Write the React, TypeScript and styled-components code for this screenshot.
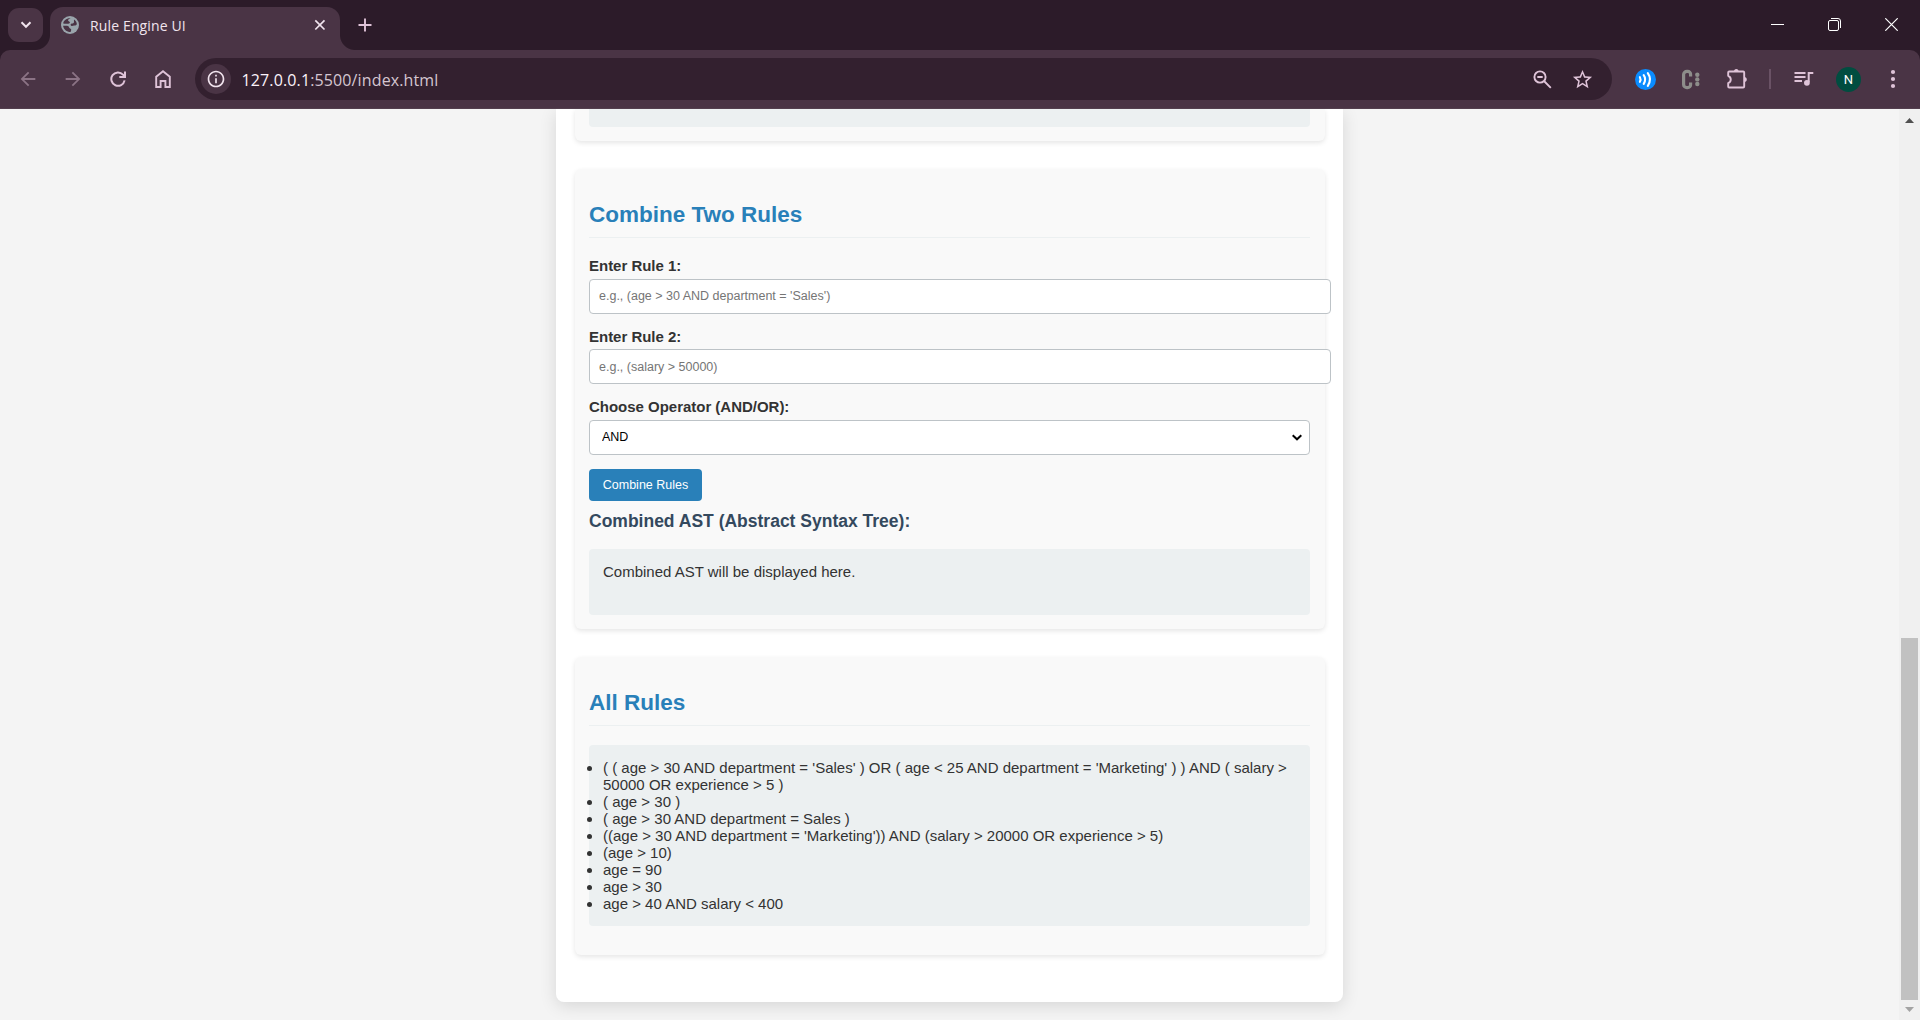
import React from 'react';
import styled, { createGlobalStyle } from 'styled-components';
import { MdArrowBack, MdArrowForward, MdInfoOutline, MdStarBorder } from 'react-icons/md';

const GlobalStyle = createGlobalStyle`
  html, body { margin: 0; padding: 0; overflow: hidden; }
  * { box-sizing: border-box; }
  svg { display: block; flex: none; }
`;

const uiFont = `'Open Sans', 'Noto Sans', sans-serif`;
const pageFont = `'Liberation Sans', Arial, sans-serif`;
const pink = '#dfc3d8';

const Window = styled.div`
  width: 1920px;
  height: 1020px;
  display: flex;
  flex-direction: column;
  overflow: hidden;
  background: #2c1b29;
`;

/* ---------- tab strip ---------- */

const TabStrip = styled.header`
  height: 50px;
  flex: none;
  display: flex;
  align-items: flex-start;
  padding-left: 8px;
`;

const TabSearch = styled.button`
  width: 35px;
  height: 34px;
  margin: 8px 7px 0 0;
  padding: 0;
  border: 0;
  border-radius: 11px;
  background: #4a3445;
  display: flex;
  align-items: center;
  justify-content: center;
`;

const Tab = styled.div`
  position: relative;
  width: 290px;
  height: 43px;
  margin-top: 7px;
  padding: 0 14px 7px 11px;
  border-radius: 13px 13px 0 0;
  background: #4a3445;
  display: flex;
  align-items: center;
  font: 14px ${uiFont};
  color: #f1e4ee;

  &::before,
  &::after {
    content: '';
    position: absolute;
    bottom: 0;
    width: 15px;
    height: 15px;
  }
  &::before {
    left: -15px;
    background: radial-gradient(circle at 0 0, transparent 14.5px, #4a3445 15.5px);
  }
  &::after {
    right: -15px;
    background: radial-gradient(circle at 100% 0, transparent 14.5px, #4a3445 15.5px);
  }
`;

const TabTitle = styled.span`
  flex: 1;
  margin-left: 11px;
  padding-top: 1px;
  line-height: 20px;
  letter-spacing: 0.14px;
  white-space: nowrap;
`;

const NewTab = styled.button`
  width: 40px;
  height: 50px;
  margin-left: 5px;
  padding: 0;
  border: 0;
  background: none;
  display: flex;
  align-items: center;
  justify-content: center;
`;

const WindowControls = styled.div`
  margin-left: auto;
  height: 49px;
  display: flex;
`;

const WindowButton = styled.button`
  width: 57px;
  padding: 0;
  border: 0;
  background: none;
  display: flex;
  align-items: center;
  justify-content: center;
`;

/* ---------- toolbar ---------- */

const Toolbar = styled.nav`
  height: 59px;
  flex: none;
  display: flex;
  align-items: center;
  padding-left: 5px;
  border-radius: 10px 10px 0 0;
  border-bottom: 1px solid #533f4e;
  background: #4a3445;
`;

const Cell = styled.span<{ $w: number; $gap?: number; $tone?: string }>`
  width: ${(p) => p.$w}px;
  height: 42px;
  margin-left: ${(p) => p.$gap ?? 0}px;
  flex: none;
  display: flex;
  align-items: center;
  justify-content: center;
  color: ${(p) => p.$tone ?? pink};
`;

const AddressBar = styled.div`
  width: 1417px;
  height: 42px;
  margin-left: 10px;
  padding-left: 6px;
  padding-right: 10px;
  border-radius: 21px;
  background: #33202f;
  display: flex;
  align-items: center;
  flex: none;
`;

const SiteInfo = styled.span`
  width: 30px;
  height: 30px;
  border-radius: 50%;
  background: #4a3445;
  color: #f1e4ee;
  display: flex;
  align-items: center;
  justify-content: center;
`;

const Url = styled.span`
  flex: 1;
  margin-left: 10.5px;
  padding-top: 1px;
  font: 16px/24px ${uiFont};
  letter-spacing: 0.13px;
  color: #d5c6d1;
`;

const Host = styled.span`
  color: #fbf2f9;
`;

const Separator = styled.span`
  width: 2px;
  height: 20px;
  background: #6a5265;
`;

const Avatar = styled.span`
  width: 25px;
  height: 25px;
  border-radius: 50%;
  background: #004d40;
  color: #fff;
  font: 13px/25px Roboto, sans-serif;
  text-align: center;
`;

/* ---------- page ---------- */

const Viewport = styled.div`
  height: 911px;
  flex: none;
  display: flex;
  overflow: hidden;
  background: #f4f4f4;
`;

const Page = styled.main`
  flex: 1;
  padding-left: 556px;
  overflow: hidden;
  font: 15px/17px ${pageFont};
  color: #333;
`;

const Container = styled.div`
  width: 787px;
  height: 893px;
  padding: 0 18px 0 19px;
  border-radius: 0 0 8px 8px;
  background: #fff;
  box-shadow: 0 4px 17px rgba(0, 0, 0, 0.12);
`;

const Card = styled.section<{ $h: number; $cut?: boolean }>`
  height: ${(p) => p.$h}px;
  margin-bottom: 28px;
  padding: ${(p) => (p.$cut ? '0 15px 14px 14px' : '32px 15px 14px 14px')};
  border-radius: ${(p) => (p.$cut ? '0 0 6px 6px' : '6px')};
  background: #f9f9f9;
  box-shadow: 0 2px 5px rgba(0, 0, 0, 0.1);
`;

const Title = styled.h2`
  height: 37px;
  margin: 0 0 19px;
  padding-top: 1px;
  border-bottom: 1px solid #ecf0f1;
  font-size: 22.5px;
  line-height: 26px;
  color: #2980b9;
`;

const Field = styled.div`
  margin-bottom: 14px;
`;

const Label = styled.label<{ $h?: number }>`
  display: block;
  height: ${(p) => p.$h ?? 22}px;
  font-weight: bold;
  letter-spacing: -0.02px;
`;

const TextInput = styled.input<{ $lift?: number }>`
  display: block;
  width: 742px;
  height: 35px;
  padding: 0 9px ${(p) => p.$lift ?? 0}px;
  border: 1px solid #bdc3c7;
  border-radius: 4px;
  background: #fff;
  font: 12.5px ${pageFont};

  &::placeholder {
    color: #757575;
    opacity: 1;
  }
`;

const SelectBox = styled.div`
  width: 721px;
  height: 35px;
  padding: 0 7px 1px 12px;
  border: 1px solid #bdc3c7;
  border-radius: 4px;
  background: #fff;
  display: flex;
  align-items: center;
`;

const Select = styled.select`
  appearance: none;
  flex: 1;
  padding: 0;
  border: 0;
  background: none;
  font: 12.5px ${pageFont};
  color: #000;
`;

const Button = styled.button`
  display: block;
  width: 113px;
  height: 32px;
  padding: 0 0 1px;
  border: 0;
  border-radius: 4px;
  background: #2980b9;
  color: #fff;
  font: 12.5px ${pageFont};
`;

const Subtitle = styled.h3`
  height: 20px;
  margin: 10px 0 18px;
  font-size: 17.5px;
  line-height: 20px;
  color: #34495e;
`;

const Output = styled.div<{ $h: number; $cut?: boolean }>`
  height: ${(p) => p.$h}px;
  padding: ${(p) => (p.$cut ? 0 : 14)}px;
  border-radius: ${(p) => (p.$cut ? '0 0 4px 4px' : '4px')};
  background: #ecf0f1;
`;

const RuleList = styled.ul`
  width: 721px;
  height: 181px;
  margin: 0;
  padding: 14px;
  border-radius: 4px;
  background: #ecf0f1;
`;

const Scrollbar = styled.aside`
  width: 21px;
  padding: 9px 2px 8px;
  background: #f0f0f0;
  display: flex;
  flex-direction: column;
  align-items: center;
`;

const Thumb = styled.div`
  width: 17px;
  height: 362px;
  margin: auto 0 7px;
  background: #c1c1c1;
`;

const rules = [
  "( ( age > 30 AND department = 'Sales' ) OR ( age < 25 AND department = 'Marketing' ) ) AND ( salary > 50000 OR experience > 5 )",
  '( age > 30 )',
  '( age > 30 AND department = Sales )',
  "((age > 30 AND department = 'Marketing')) AND (salary > 20000 OR experience > 5)",
  '(age > 10)',
  'age = 90',
  'age > 30',
  'age > 40 AND salary < 400',
];

export default function App() {
  return (
    <>
      <GlobalStyle />
      <Window>
        <TabStrip>
          <TabSearch aria-label="Search tabs">
            <svg width="12" height="8" viewBox="0 0 12 8" fill="none" stroke="#f1e4ee" strokeWidth="2">
              <path d="M1.500 1.300 6 5.800l4.500-4.500" />
            </svg>
          </TabSearch>
          <Tab>
            <svg width="18" height="18" viewBox="0 0 18 18">
              <circle cx="9" cy="9" r="9" fill="#9aa5ac" />
              <path
                d="M9.600 2.200c-1 .5-2.400 1-2.500 2-.1 1.200 1.500 1 1.800 2 .3 1.100-1.500 1.500-2.800 1.600-1.400.1-2.300.1-3.900-.2C2.500 4.600 5.300 1.900 9.600 2.200zM2.100 9.700c1.600.2 3.500-.3 4.900.4 1.200.6.8 1.900 2 2.300 1 .4 1.500 1 1.100 2-.3.600-.4 1.100-.4 1.600C5.600 16 2.500 13.300 2.100 9.700zM13.200 3.600c1.500 1.100 2.500 2.700 2.700 4.600-.8.700-1.300 1.500-2.500 1.400-1.300-.1-2.100.6-3.200.1-.8-.4-.8-1.400 0-1.900.9-.5 2-.2 2.600-1.100.600-.900-.3-2 .4-3.100z"
                fill="#4a3445"
              />
            </svg>
            <TabTitle>Rule Engine UI</TabTitle>
            <svg width="12" height="12" viewBox="0 0 12 12" stroke="#f1e4ee" strokeWidth="1.700">
              <path d="M1.300 1.300l9.200 9.200M10.500 1.300l-9.200 9.200" />
            </svg>
          </Tab>
          <NewTab aria-label="New tab">
            <svg width="14" height="14" viewBox="0 0 14 14" stroke={pink} strokeWidth="1.900">
              <path d="M7 .5v13M.5 7h13" />
            </svg>
          </NewTab>
          <WindowControls>
            <WindowButton aria-label="Minimize">
              <svg width="13" height="13" viewBox="0 0 13 13" stroke="#fff">
                <path d="M0 6.500h13" />
              </svg>
            </WindowButton>
            <WindowButton aria-label="Restore">
              <svg width="13" height="13" viewBox="0 0 13 13" fill="none" stroke="#fff">
                <rect x=".5" y="2.500" width="10" height="10" rx="1.500" />
                <path d="M3 .5h7a2.500 2.500 0 0 1 2.500 2.500v7" />
              </svg>
            </WindowButton>
            <WindowButton aria-label="Close">
              <svg width="13" height="13" viewBox="0 0 13 13" stroke="#fff" strokeWidth="1.200">
                <path d="M.3.3l12.400 12.400M12.700.3L.3 12.700" />
              </svg>
            </WindowButton>
          </WindowControls>
        </TabStrip>

        <Toolbar>
          <Cell $w={45} $tone="#8b7385"><MdArrowBack size={22} /></Cell>
          <Cell $w={45} $tone="#8b7385"><MdArrowForward size={22} /></Cell>
          <Cell $w={45}>
            <svg width="16" height="16" viewBox="0 0 16 16" fill="none" stroke="currentColor" strokeWidth="2">
              <path d="M14.600 9.400A6.700 6.700 0 1 1 13 3.600l1.300 1.600M15 .4V6H9.300" />
            </svg>
          </Cell>
          <Cell $w={45}>
            <svg width="16" height="18" viewBox="0 0 16 18" fill="none" stroke="currentColor" strokeWidth="1.900">
              <path d="M1.200 17V6.800L8 1.300l6.800 5.500V17h-4.400v-6H5.600v6z" />
            </svg>
          </Cell>
          <AddressBar>
            <SiteInfo><MdInfoOutline size={20} /></SiteInfo>
            <Url><Host>127.0.0.1</Host>:5500/index.html</Url>
            <Cell $w={40}>
              <svg width="19" height="19" viewBox="0 0 19 19" fill="none" stroke="currentColor" strokeWidth="1.900">
                <circle cx="7" cy="7" r="5.600" />
                <path d="M11 11l6.800 6.800M4.300 7h5.400" />
              </svg>
            </Cell>
            <Cell $w={40}><MdStarBorder size={23} /></Cell>
          </AddressBar>
          <Cell $w={21} $gap={23}>
            <svg width="21" height="21" viewBox="0 0 21 21" fill="none" stroke="#fff" strokeWidth="2.100" strokeLinecap="round">
              <circle cx="10.500" cy="10.500" r="10.500" fill="#0a8cff" stroke="none" />
              <path d="M4.900 8.200q1.300 2.300 0 4.600M8.700 6.200q2.900 4.300 0 8.600M12.800 4.200q4.400 6.300 0 12.600" />
            </svg>
          </Cell>
          <Cell $w={20} $gap={24} $tone="#8d8d8a">
            <svg width="20" height="21" viewBox="0 0 20 21">
              <path
                d="M10.600 7.500V5.500A3 3 0 0 0 7.600 2.300h-.7A3.300 3.300 0 0 0 3.600 5.600v9.800a3.300 3.300 0 0 0 3.300 3.300h.7a3 3 0 0 0 3-3.200v-2"
                fill="none"
                stroke="currentColor"
                strokeWidth="3.200"
              />
              <g fill="currentColor">
                <circle cx="17.300" cy="5.800" r="2.200" />
                <circle cx="17.300" cy="10.400" r="2.200" />
                <circle cx="17.300" cy="15" r="2.200" />
              </g>
            </svg>
          </Cell>
          <Cell $w={22} $gap={26}>
            <svg width="22" height="22" viewBox="0 0 22 22">
              <path d="M2.200 4.500q0-1 1-1h14q1 0 1 1v14q0 1-1 1h-14q-1 0-1-1v-3.300c3.400-1.500 3.400-5.900 0-7.400z" fill="none" stroke="currentColor" strokeWidth="1.900" strokeLinejoin="round" />
              <path d="M8 3.500a2.300 2.600 0 0 1 4.600 0zM18.200 9a2.600 2.500 0 0 1 0 5z" fill="currentColor" />
            </svg>
          </Cell>
          <Cell $w={2} $gap={21}><Separator /></Cell>
          <Cell $w={20} $gap={23}>
            <svg width="20" height="18" viewBox="0 0 20 18">
              <path d="M.5 3h11M.5 7h11M.5 11h7.500" fill="none" stroke="currentColor" strokeWidth="1.800" />
              <path d="M19.300 3h-4.600v9" fill="none" stroke="currentColor" strokeWidth="2" />
              <circle cx="12.900" cy="12.800" r="2.900" fill="currentColor" />
            </svg>
          </Cell>
          <Cell $w={25} $gap={22}><Avatar>N</Avatar></Cell>
          <Cell $w={6} $gap={29}>
            <svg width="6" height="20" viewBox="0 0 6 20" fill="currentColor">
              <circle cx="3" cy="3" r="2.100" />
              <circle cx="3" cy="10" r="2.100" />
              <circle cx="3" cy="17" r="2.100" />
            </svg>
          </Cell>
        </Toolbar>

        <Viewport>
          <Page>
            <Container>
              <Card $h={32} $cut>
                <Output $h={18} $cut />
              </Card>

              <Card $h={460}>
                <Title>Combine Two Rules</Title>
                <Field>
                  <Label htmlFor="rule1">Enter Rule 1:</Label>
                  <TextInput id="rule1" $lift={2} placeholder="e.g., (age > 30 AND department = 'Sales')" />
                </Field>
                <Field>
                  <Label htmlFor="rule2" $h={21}>Enter Rule 2:</Label>
                  <TextInput id="rule2" placeholder="e.g., (salary > 50000)" />
                </Field>
                <Field>
                  <Label htmlFor="operator">Choose Operator (AND/OR):</Label>
                  <SelectBox>
                    <Select id="operator" defaultValue="AND">
                      <option>AND</option>
                      <option>OR</option>
                    </Select>
                    <svg width="10" height="7" viewBox="0 0 10 7" fill="none" stroke="#000" strokeWidth="2">
                      <path d="M.7 1.300 5 5.300l4.300-4" />
                    </svg>
                  </SelectBox>
                </Field>
                <Button>Combine Rules</Button>
                <Subtitle>Combined AST (Abstract Syntax Tree):</Subtitle>
                <Output $h={66}>Combined AST will be displayed here.</Output>
              </Card>

              <Card $h={298}>
                <Title>All Rules</Title>
                <RuleList>
                  {rules.map((rule) => (
                    <li key={rule}>{rule}</li>
                  ))}
                </RuleList>
              </Card>
            </Container>
          </Page>
          <Scrollbar>
            <svg width="9" height="5" viewBox="0 0 9 5"><path d="M0 5 4.500 0 9 5z" fill="#505050" /></svg>
            <Thumb />
            <svg width="9" height="5" viewBox="0 0 9 5"><path d="M0 0h9L4.500 5z" fill="#a3a3a3" /></svg>
          </Scrollbar>
        </Viewport>
      </Window>
    </>
  );
}
